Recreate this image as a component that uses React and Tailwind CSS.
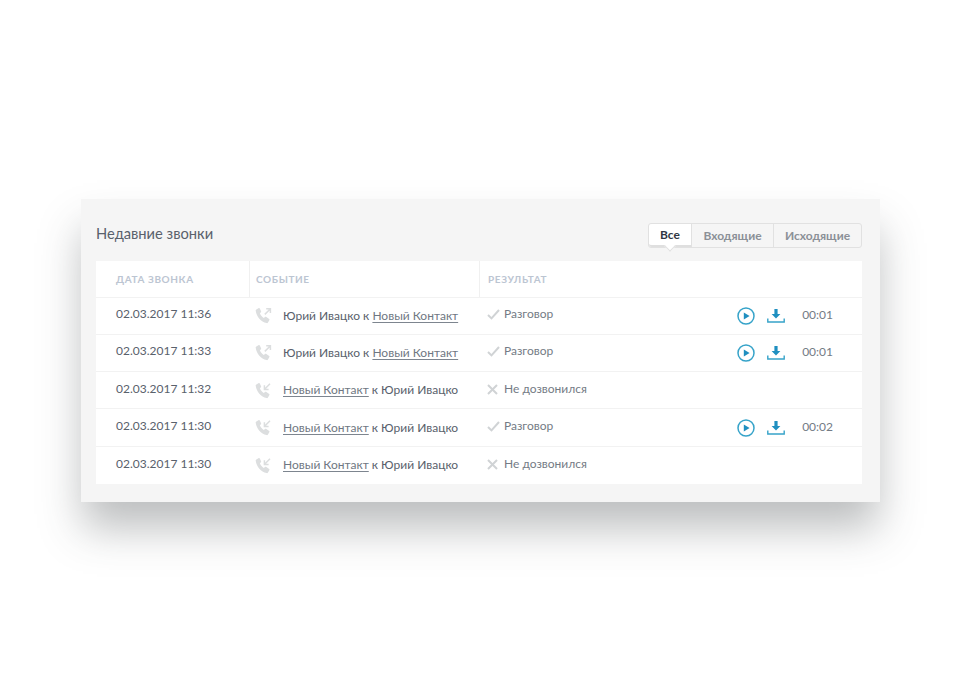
const rows = [
  { d: "02.03.2017 11:36", out: true, ok: true, t: "00:01" },
  { d: "02.03.2017 11:33", out: true, ok: true, t: "00:01" },
  { d: "02.03.2017 11:32", out: false, ok: false },
  { d: "02.03.2017 11:30", out: false, ok: true, t: "00:02" },
  { d: "02.03.2017 11:30", out: false, ok: false },
];

function Phone({ out }) {
  return (
    <svg width="17" height="17" viewBox="0 0 17 17" className="shrink-0">
      <path d="M1 2.8 L3.8 1 C4.3 0.8 4.6 1 4.8 1.4 L6.1 4.3 C6.3 4.7 6.2 5 5.9 5.3 L4.9 6.3 C5.3 7.8 7 10 8.8 11 L10 9.9 C10.4 9.6 10.7 9.6 11 9.8 L14.2 12 C14.6 12.3 14.6 12.6 14.4 13 L13 15.6 C12.7 16.1 12.2 16.2 11.6 16.1 C5.9 15 1.6 9.8 0.7 3.8 C0.6 3.3 0.7 3 1 2.8 Z" fill="#dcdedf" />
      {out ? (
        <path d="M9.8 7.4 L15 2.2 M11.2 1.8 H15.4 V6" fill="none" stroke="#dcdedf" strokeWidth="1.5" />
      ) : (
        <path d="M15 1.8 L9.8 7 M9.4 3.2 V7.4 H13.6" fill="none" stroke="#dcdedf" strokeWidth="1.5" />
      )}
    </svg>
  );
}

function Check() {
  return (
    <svg width="13" height="11" viewBox="0 0 13 11" className="shrink-0">
      <path d="M1 6 L4.5 9.4 L12 1" fill="none" stroke="#d0d3d5" strokeWidth="2" />
    </svg>
  );
}

function Cross() {
  return (
    <svg width="11" height="11" viewBox="0 0 11 11" className="shrink-0">
      <path d="M1 1 L10 10 M10 1 L1 10" fill="none" stroke="#d0d3d5" strokeWidth="2" />
    </svg>
  );
}

function Play() {
  return (
    <svg width="18" height="18" viewBox="0 0 18 18">
      <circle cx="9" cy="9" r="8" fill="none" stroke="#36a3c9" strokeWidth="1.5" />
      <path d="M6.8 5.4 L12.6 9 L6.8 12.6 Z" fill="#1f8fc0" />
    </svg>
  );
}

function Download() {
  return (
    <svg width="18" height="16" viewBox="0 0 18 16">
      <path d="M7.4 1 H10.6 V6 H13.4 L9 10.6 L4.6 6 H7.4 Z" fill="#1f8fc0" />
      <path d="M0.8 10.5 V14 H17.2 V10.5" fill="none" stroke="#36a3c9" strokeWidth="1.4" />
    </svg>
  );
}

export default function App() {
  const link = "underline underline-offset-2 decoration-[#7d858f] text-[#6f7782]";
  return (
    <div className="w-[960px] h-[700px] bg-white pt-[199px] pl-[81px] font-['Lato','Noto_Sans',sans-serif] overflow-hidden">
      <div className="w-[799px] h-[303px] bg-[#f5f5f5] pl-[15px] pr-[18px] shadow-[0_28px_40px_-2px_rgba(60,64,68,0.34)] flex flex-col">
        <div className="h-[62px] flex items-center justify-between pt-[10px]">
          <div className="text-[14.7px] text-[#59616c] -mt-[3px]">Недавние звонки</div>
          <div className="flex h-[25px] rounded-[3px] border border-[#e1e1e1] text-[12px] font-bold text-[#8b9097] relative">
            <div className="w-[42px] pt-[2px] flex items-center justify-center bg-white text-[#2f3742] rounded-l-[3px] border-b-2 border-b-[#dfdfdf] relative">
              Все
              <span className="absolute left-1/2 -translate-x-1/2 -bottom-[5px] w-[8px] h-[8px] rotate-45 bg-white border-r border-b border-[#e1e1e1]" />
            </div>
            <div className="w-[82px] pt-[1px] flex items-center justify-center border-l border-[#e1e1e1]">Входящие</div>
            <div className="w-[88px] pt-[1px] flex items-center justify-center border-l border-[#e1e1e1]">Исходящие</div>
          </div>
        </div>
        <div className="bg-white w-[766px]">
          <div className="grid grid-cols-[153px_230px_1fr] h-[36.5px] items-stretch border-b border-[#f2f2f2] text-[10px] font-bold tracking-[0.6px] text-[#bcc5d2]">
            <div className="flex items-center pl-[20px] pt-[2px]">ДАТА ЗВОНКА</div>
            <div className="flex items-center pl-[6px] pt-[2px] border-l border-[#f0f0f0]">СОБЫТИЕ</div>
            <div className="flex items-center pl-[8px] pt-[2px] border-l border-[#f0f0f0]">РЕЗУЛЬТАТ</div>
          </div>
          {rows.map((r, i) => (
            <div key={i} className={`grid grid-cols-[153px_230px_1fr] h-[37.3px] items-center text-[12px] text-[#59616c] ${i < rows.length - 1 ? "border-b border-[#f2f2f2]" : ""}`}>
              <div className="pl-[20px] -mt-[3px]">{r.d}</div>
              <div className="pl-[6px] flex items-center gap-[11px]">
                <Phone out={r.out} />
                {r.out ? (
                  <span>Юрий Ивацко к <span className={link}>Новый Контакт</span></span>
                ) : (
                  <span><span className={link}>Новый Контакт</span> к Юрий Ивацко</span>
                )}
              </div>
              <div className="pl-[8px] flex items-center">
                <span className="w-[17px] flex items-center -mt-[2px]">{r.ok ? <Check /> : <Cross />}</span>
                <span className="text-[#747b85] -mt-[3px]">{r.ok ? "Разговор" : "Не дозвонился"}</span>
                {r.t && (
                  <div className="ml-auto flex items-center pr-[29px]">
                    <Play />
                    <span className="ml-[12px]"><Download /></span>
                    <span className="ml-[17px] text-[#747b85] -mt-[1px]">{r.t}</span>
                  </div>
                )}
              </div>
            </div>
          ))}
        </div>
      </div>
    </div>
  );
}
